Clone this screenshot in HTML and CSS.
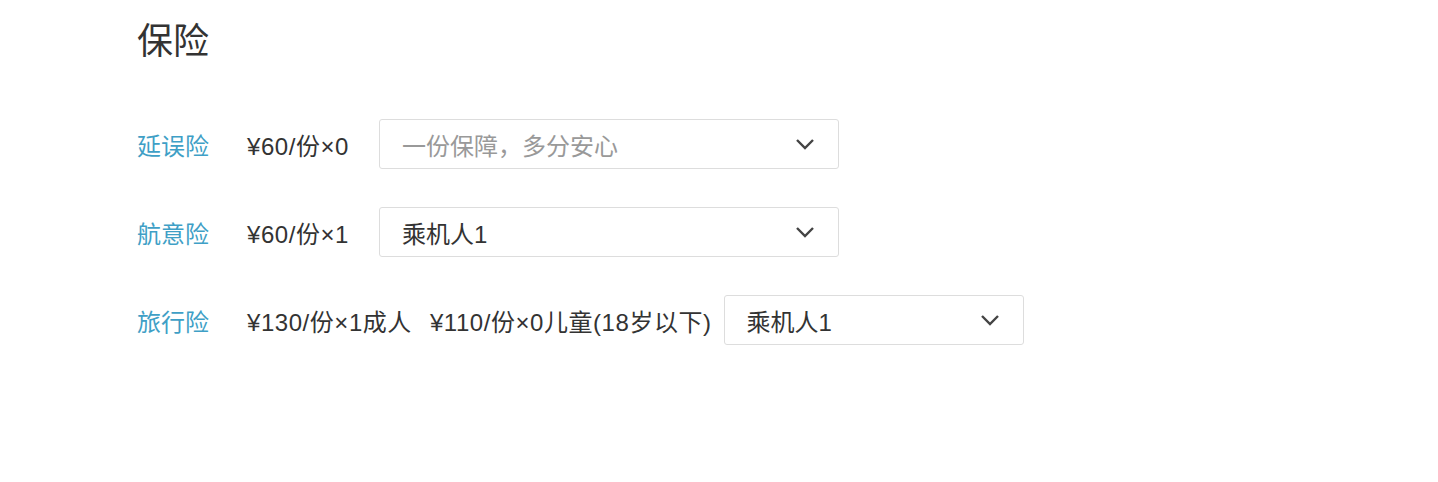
FILE: index.html
```html
<!DOCTYPE html>
<html lang="zh">
<head>
<meta charset="utf-8">
<link rel="stylesheet" href="styles.css">
</head>
<body>
<div class="page">
  <h1 class="title">保险</h1>
  <div class="rows">
    <div class="row">
      <span class="label">延误险</span>
      <span class="price">¥60/份×0</span>
      <div class="select wide">
        <span class="placeholder">一份保障，多分安心</span>
        <svg class="chev" width="20" height="12" viewBox="0 0 20 12"><path d="M2 2 L10 10 L18 2" fill="none" stroke="#444" stroke-width="2.4"/></svg>
      </div>
    </div>
    <div class="row">
      <span class="label">航意险</span>
      <span class="price">¥60/份×1</span>
      <div class="select wide">
        <span class="value">乘机人1</span>
        <svg class="chev" width="20" height="12" viewBox="0 0 20 12"><path d="M2 2 L10 10 L18 2" fill="none" stroke="#444" stroke-width="2.4"/></svg>
      </div>
    </div>
    <div class="row">
      <span class="label">旅行险</span>
      <span class="price multi">¥130/份×1成人</span>
      <span class="price extra">¥110/份×0儿童(18岁以下)</span>
      <div class="select narrow">
        <span class="value">乘机人1</span>
        <svg class="chev" width="20" height="12" viewBox="0 0 20 12"><path d="M2 2 L10 10 L18 2" fill="none" stroke="#444" stroke-width="2.4"/></svg>
      </div>
    </div>
  </div>
</div>
</body>
</html>
```
FILE: styles.css
```css
html, body {
  margin: 0;
  padding: 0;
  background: #fff;
}
body {
  font-family: "Liberation Sans", "Noto Sans CJK SC", sans-serif;
  color: #333;
}
.page {
  padding-left: 137px;
  padding-top: 12px;
}
.title {
  margin: 0;
  font-family: "Noto Sans CJK SC", sans-serif;
  font-size: 36px;
  font-weight: 400;
  line-height: 52px;
  color: #333;
}
.rows {
  margin-top: 55px;
  display: flex;
  flex-direction: column;
  gap: 38px;
}
.row {
  display: flex;
  align-items: center;
  height: 50px;
  font-size: 24px;
}
.label {
  width: 110px;
  color: #3f9fc6;
}
.price {
  min-width: 120px;
  margin-right: 12px;
  letter-spacing: 0.55px;
  color: #333;
}
.price.multi {
  min-width: 0;
  margin-right: 18px;
}
.price.extra {
  min-width: 0;
}
.select {
  box-sizing: border-box;
  height: 50px;
  border: 1px solid #ddd;
  border-radius: 3px;
  display: flex;
  align-items: center;
  justify-content: space-between;
  padding: 0 23px 0 22px;
}
.select.wide { width: 460px; }
.select.narrow { width: 300px; }
.placeholder { color: #999; }
.value { color: #333; }
.chev { display: block; }
```
